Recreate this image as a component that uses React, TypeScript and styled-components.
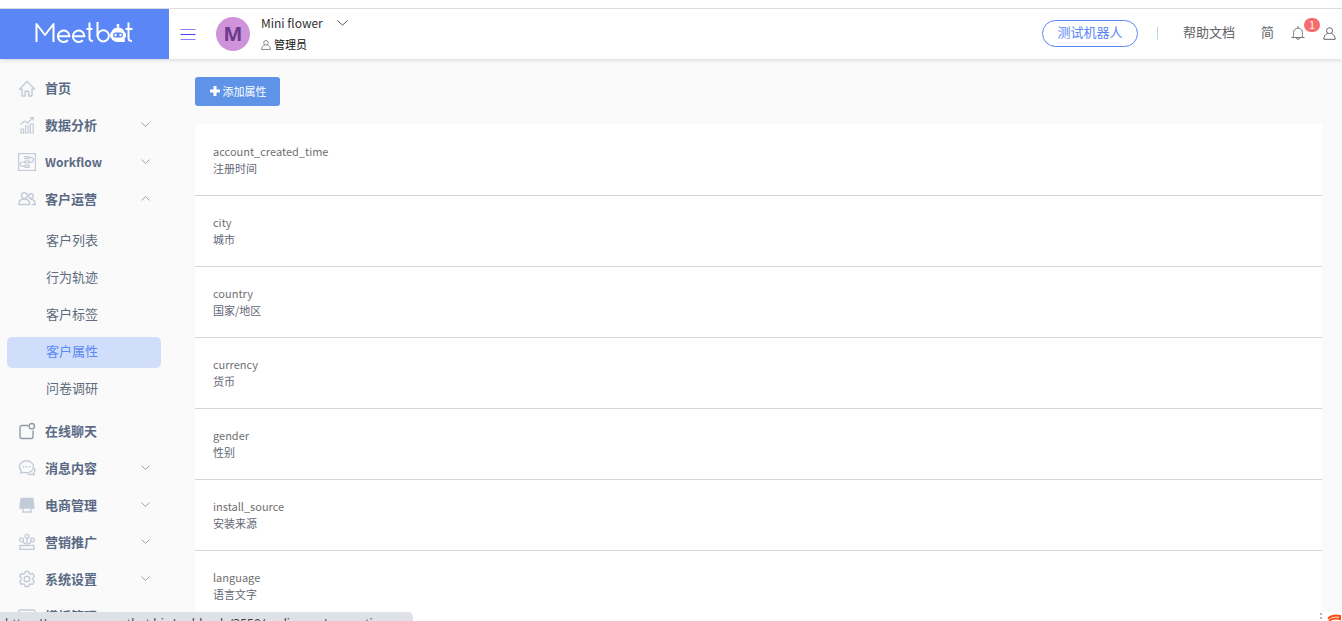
import React from 'react';
import styled, { createGlobalStyle, css } from 'styled-components';

const Global = createGlobalStyle`
  * { box-sizing: border-box; }
  html, body { margin: 0; height: 100%; overflow: hidden; }
  body {
    background: #fafafa;
    font-family: "Noto Sans CJK SC", "Noto Sans", sans-serif;
    font-size: 13px;
    color: #606266;
  }
  #root { height: 100%; }
  button { font: inherit; color: inherit; border: 0; background: none; padding: 0; cursor: pointer; }
  a { color: inherit; text-decoration: none; }
  ul { list-style: none; margin: 0; padding: 0; }
  svg { display: block; flex: none; }
`;

const Page = styled.div`
  height: 100vh;
  overflow: hidden;
  display: flex;
  flex-direction: column;
  border-top: 8px solid #fff;
`;

const Header = styled.header`
  display: flex;
  flex: none;
  height: 51px;
  background: #fff;
  border-top: 1px solid #dcdcdc;
  box-shadow: 0 1px 4px rgba(0, 21, 41, 0.16);
  position: relative;
  z-index: 1;
`;

const Brand = styled.a`
  width: 169px;
  flex: none;
  background: #5a87f5;
  padding: 10px 0 0 34px;
`;

const MenuToggle = styled.button`
  margin-left: 11px;
  width: 16px;
  display: flex;
  align-items: center;
`;

const Avatar = styled.div`
  width: 34px;
  height: 34px;
  margin: 8px 11px 0 20px;
  border-radius: 50%;
  background: #ce93d8;
  color: #6a3a8c;
  font: 700 20px/34px "Noto Sans", sans-serif;
  text-align: center;
`;

const Account = styled.div`
  padding-top: 4px;
`;

const AccountName = styled.button`
  display: flex;
  align-items: center;
  gap: 14px;
  font-size: 12px;
  line-height: 20px;
  color: #303133;
`;

const Role = styled.div`
  display: flex;
  align-items: center;
  gap: 3px;
  font-size: 11px;
  line-height: 23px;
  color: #111;
`;

const Tools = styled.div`
  margin-left: auto;
  padding-right: 6px;
  display: flex;
  align-items: center;
  height: 48px;
`;

const TestBot = styled.button`
  width: 96px;
  height: 27px;
  border: 1px solid #5a87f5;
  border-radius: 14px;
  color: #5a87f5;
  line-height: 22px;
  padding-bottom: 2px;
`;

const Divider = styled.span`
  width: 1px;
  height: 13px;
  background: #b5dcd8;
  margin: 0 25px 0 19px;
`;

const ToolLink = styled.a`
  line-height: 20px;
  padding-bottom: 2px;
`;

const Lang = styled.button`
  margin-left: 26px;
  line-height: 20px;
  padding-bottom: 2px;
`;

const Bell = styled.button`
  position: relative;
  margin: 0 17px 0 16px;
`;

const Badge = styled.span`
  position: absolute;
  left: 14px;
  top: -7px;
  width: 16px;
  height: 14px;
  border-radius: 7px;
  background: #f56c6c;
  color: #fff;
  font-size: 10px;
  line-height: 14px;
  text-align: center;
`;

const Body = styled.div`
  display: flex;
  flex: 1;
  min-height: 0;
`;

const Sidebar = styled.nav`
  width: 169px;
  flex: none;
  padding: 10px 8px 0 7px;
  overflow: hidden;
`;

const Item = styled.button`
  display: flex;
  align-items: center;
  width: 100%;
  height: 37px;
  padding: 0 11px 0 11px;
  font-weight: 700;
  color: #5a6a85;
  text-align: left;
`;

const ItemIcon = styled.span`
  width: 18px;
  margin-right: 9px;
  color: #c3cad8;
`;

const ItemText = styled.span<{ $latin: boolean }>`
  flex: 1;
  font-size: ${(p) => (p.$latin ? 12 : 13)}px;
`;

const SubMenu = styled.ul`
  padding: 9px 0 7px;
  display: grid;
  gap: 6px;
`;

const SubLink = styled.a<{ $active?: boolean }>`
  display: block;
  height: 31px;
  line-height: 28px;
  padding-left: 39px;
  border-radius: 5px;
  color: #5f6b7c;
  ${(p) => p.$active && css`
    background: #d0defb;
    color: #5a87f5;
  `}
`;

const Main = styled.main`
  flex: 1;
  min-width: 0;
  padding: 18px 20px 0 26px;
`;

const AddButton = styled.button`
  display: flex;
  align-items: center;
  justify-content: center;
  gap: 3px;
  width: 85px;
  height: 29px;
  padding: 0 0 1px 1px;
  border-radius: 3px;
  background: #5e93e8;
  color: #fff;
  font-size: 11px;
`;

const List = styled.ul`
  margin-top: 18px;
  padding-top: 1px;
  background: #fff;
`;

const Row = styled.li`
  padding: 18px;
  border-bottom: 1px solid #d3d6de;
`;

const Key = styled.div`
  font-size: 11px;
  line-height: 17px;
  color: #707070;
`;

const Label = styled.div`
  font-size: 11px;
  line-height: 17px;
  color: #5f6775;
`;

const StatusBar = styled.div`
  position: fixed;
  left: 0;
  bottom: 0;
  z-index: 2;
  width: 413px;
  height: 9px;
  overflow: hidden;
  padding-left: 5px;
  border-radius: 0 5px 0 0;
  background: #dee1e6;
  color: #3c4043;
  font-family: "Noto Sans", sans-serif;
  font-size: 12px;
  line-height: 23px;
  white-space: nowrap;
`;

const InputBadge = styled.div`
  position: fixed;
  right: 0;
  bottom: 0;
  z-index: 2;
  width: 22px;
  height: 9px;
  background: #fff;
`;

const Svg = ({ size = 18, sw = 1.4, children }: { size?: number; sw?: number; children: React.ReactNode }) => (
  <svg width={size} height={size} viewBox="0 0 18 18" fill="none" stroke="currentColor" strokeWidth={sw} aria-hidden="true">
    {children}
  </svg>
);

const Chevron = ({ up }: { up?: boolean }) => (
  <svg width="9" height="5" viewBox="0 0 9 5" fill="none" stroke="#9aa2b1" aria-hidden="true">
    <path d={up ? 'M.5 4.4 4.5.6l4 3.8' : 'M.5.6l4 3.8 4-3.8'} />
  </svg>
);

const NameChevron = () => (
  <svg width="11" height="6" viewBox="0 0 11 6" fill="none" stroke="#4d5669" aria-hidden="true">
    <path d="M.5.5l5 4.700 5-4.700" />
  </svg>
);

const UserGlyph = ({ size }: { size: number }) => (
  <svg width={size} height={size} viewBox="0 0 13 13" fill="none" stroke="#666" strokeWidth="1" aria-hidden="true">
    <circle cx="6.5" cy="3.7" r="3" />
    <path d="M4.7 6.3C2.4 7.2.9 9.3.8 12.3h11.4c-.1-3-1.6-5.1-3.9-6" />
  </svg>
);

const icons = {
  home: <Svg><path d="M1.5 10 9 2.500l7.5 7.500H14v7h-3.200v-4.800H7.200V17H4v-7z" strokeLinejoin="round" /></Svg>,
  chart: <Svg sw={1.2}><path d="M3 13h2.600v4H3zM7.600 10h2.600v7H7.600zM12.300 8h2.900v9h-2.900zM2.500 8.500 6.500 5l3 2L15 1.800M11.700 1.500h3.600v3" /></Svg>,
  flow: <Svg sw={1.2}><rect x=".6" y=".6" width="16.800" height="16.800" /><path d="M7 3.700h4v2H7zM7 8h4v2H7zM7 12.300h4v2H7zM11 4.700h2.300a2.200 2.200 0 0 1 0 4.400H11M7 9H4.400a2.200 2.200 0 0 0 0 4.400H7" /></Svg>,
  users: <Svg><circle cx="6.300" cy="5.500" r="2.900" /><circle cx="13" cy="6" r="2.300" /><path d="M.7 14.500c0-3.500 2-5.500 5.600-5.500s5.400 2 5.400 5.500zM12 9.300c3.400-.3 5.300 1.700 5.300 5.200h-3.600" /></Svg>,
  chat: <Svg><path d="M10.500 3.500H4a2 2 0 0 0-2 2v9a2 2 0 0 0 2 2h9a2 2 0 0 0 2-2V8.500" stroke="#939aa6" /><circle cx="13.800" cy="4.200" r="2.700" stroke="#939aa6" /></Svg>,
  message: <Svg><path d="M8.500 1.800c4 0 7 2.600 7 6s-3 6-7 6c-1 0-2-.1-2.800-.4L2.800 14l.4-2.400C2 10.600 1.400 9.200 1.400 7.800c0-3.400 3.100-6 7.100-6z" /><path d="M16.200 9c1 2 .5 3.800-.7 5l.6 2-2.300-.8c-1.300.6-3 .5-4.300-.2" /><path d="M4.800 7.800h1.500M7.800 7.800h1.500M10.800 7.800h1.500" strokeWidth="1.600" /></Svg>,
  shop: <Svg><path d="M3.200 2.500h11.600L16 12H2z" fill="currentColor" /><path d="M5 12v4h8v-4" /></Svg>,
  market: <Svg sw={1.3}><rect x="2" y="12.500" width="14" height="3.800" /><circle cx="9" cy="3.300" r="1.900" /><circle cx="3.500" cy="6.800" r="1.900" /><circle cx="14.500" cy="6.800" r="1.900" /><path d="M9 5.200v7M4.800 8.300 6.500 10.500H8M13.200 8.300l-1.700 2.200H10" /></Svg>,
  gear: <Svg><circle cx="9" cy="9" r="2.800" /><path d="M7.300 1.500h3.400l.6 2 1.200.6 2.100-.6 1.600 2.700-1.300 1.700v2.200l1.300 1.700-1.600 2.700-2.100-.6-1.200.6-.6 2H7.300l-.6-2-1.200-.6-2.100.6-1.600-2.700 1.300-1.700V7.900L1.800 6.200l1.600-2.700 2.100.6 1.200-.6z" strokeLinejoin="round" /></Svg>,
  template: <Svg><rect x="1" y="3" width="16" height="14" rx="1" /><path d="M5 7h8" /></Svg>,
};

type MenuEntry = { icon: keyof typeof icons; text: string; arrow?: boolean; latin?: boolean; children?: string[] };

const menu: MenuEntry[] = [
  { icon: 'home', text: '首页' },
  { icon: 'chart', text: '数据分析', arrow: true },
  { icon: 'flow', text: 'Workflow', arrow: true, latin: true },
  { icon: 'users', text: '客户运营', arrow: true, children: ['客户列表', '行为轨迹', '客户标签', '客户属性', '问卷调研'] },
  { icon: 'chat', text: '在线聊天' },
  { icon: 'message', text: '消息内容', arrow: true },
  { icon: 'shop', text: '电商管理', arrow: true },
  { icon: 'market', text: '营销推广', arrow: true },
  { icon: 'gear', text: '系统设置', arrow: true },
  { icon: 'template', text: '模板管理' },
];

const properties = [
  ['account_created_time', '注册时间'],
  ['city', '城市'],
  ['country', '国家/地区'],
  ['currency', '货币'],
  ['gender', '性别'],
  ['install_source', '安装来源'],
  ['language', '语言文字'],
];

const Logo = () => (
  <svg width="100" height="26" viewBox="0 0 100 26" fill="none" stroke="#fff" strokeWidth="2" strokeLinejoin="round" role="img" aria-label="Meetbot">
    <path d="M2.500 23V5L11 16 19.500 5v18" />
    <path d="M24.300 17.300h11.200a5.800 5.800 0 1 0-1.600 4M39.300 17.300h11.200a5.800 5.800 0 1 0-1.600 4" />
    <path d="M55.500 3.500v15c0 2.500 1 3.600 3.500 3.600M52.500 10h6" />
    <path d="M63.500 3v14.300" />
    <circle cx="69.300" cy="16.800" r="5.600" />
    <path d="M94.500 3.500v15c0 2.500 1 3.600 3.500 3.600M91.500 10h7" />
    <path d="M84 5.500V10" strokeWidth="1.500" />
    <circle cx="84" cy="6.500" r="1.400" fill="#fff" stroke="none" />
    <path d="M77.500 13c1-3 3.300-4.500 6.500-4.500s5.500 1.500 6.500 4.500c2 .8 2 5.500 0 6.500l.5 3.500H84c-3.300 0-5.500-1.200-6.500-3.500-2-1-2-5.700 0-6.500z" fill="#fff" stroke="none" />
    <rect x="79" y="13.500" width="10" height="5" rx="2.500" fill="#5a87f5" stroke="none" />
    <circle cx="81.500" cy="16" r="1.200" fill="#fff" stroke="none" />
    <circle cx="86.500" cy="16" r="1.200" fill="#fff" stroke="none" />
  </svg>
);

export default function App() {
  return (
    <>
      <Global />
      <Page>
        <Header>
          <Brand href="#"><Logo /></Brand>
          <MenuToggle aria-label="菜单">
            <svg width="16" height="12" viewBox="0 0 16 12" aria-hidden="true">
              <path d="M.5 1.500h15M.5 11.500h15" stroke="#8580f5" />
              <path d="M.5 6.500h15" stroke="#4a40ee" />
            </svg>
          </MenuToggle>
          <Avatar>M</Avatar>
          <Account>
            <AccountName>Mini flower <NameChevron /></AccountName>
            <Role><UserGlyph size={10} />管理员</Role>
          </Account>
          <Tools>
            <TestBot>测试机器人</TestBot>
            <Divider />
            <ToolLink href="#">帮助文档</ToolLink>
            <Lang>简</Lang>
            <Bell aria-label="通知">
              <svg width="16" height="16" viewBox="0 0 16 16" fill="none" stroke="#777" aria-hidden="true">
                <path d="M1.500 12.500h13M3 12.500c.6-.8.600-2 .600-5a4.400 4.400 0 0 1 8.800 0c0 3 0 4.200.6 5M8 3V1.300M6.300 13c.2 1.800 3.200 1.800 3.400 0" />
              </svg>
              <Badge>1</Badge>
            </Bell>
            <UserGlyph size={13} />
          </Tools>
        </Header>
        <Body>
          <Sidebar>
            {menu.map((m) => (
              <React.Fragment key={m.text}>
                <Item>
                  <ItemIcon>{icons[m.icon]}</ItemIcon>
                  <ItemText $latin={!!m.latin}>{m.text}</ItemText>
                  {m.arrow && <Chevron up={!!m.children} />}
                </Item>
                {m.children && (
                  <SubMenu>
                    {m.children.map((c) => (
                      <li key={c}><SubLink href="#" $active={c === '客户属性'}>{c}</SubLink></li>
                    ))}
                  </SubMenu>
                )}
              </React.Fragment>
            ))}
          </Sidebar>
          <Main>
            <AddButton>
              <svg width="10" height="10" viewBox="0 0 10 10" aria-hidden="true"><path d="M5 0v10M0 5h10" stroke="#fff" strokeWidth="3" /></svg>
              添加属性
            </AddButton>
            <List>
              {properties.map(([key, label]) => (
                <Row key={key}>
                  <Key>{key}</Key>
                  <Label>{label}</Label>
                </Row>
              ))}
            </List>
          </Main>
        </Body>
      </Page>
      <StatusBar>https://www.app.meetbot.bio/webleads/3550/audiences/properties</StatusBar>
      <InputBadge>
        <svg width="22" height="9" viewBox="0 0 22 9" fill="none" aria-hidden="true">
          <path d="M0 1h2v2H0zM0 5h2v2H0z" fill="#b5b5b5" />
          <path d="M8 6.500c3-2.500 8-3.500 12-2.500v3c-2-1-8-1-11 2" stroke="#ff4a12" strokeWidth="2" />
        </svg>
      </InputBadge>
    </>
  );
}
